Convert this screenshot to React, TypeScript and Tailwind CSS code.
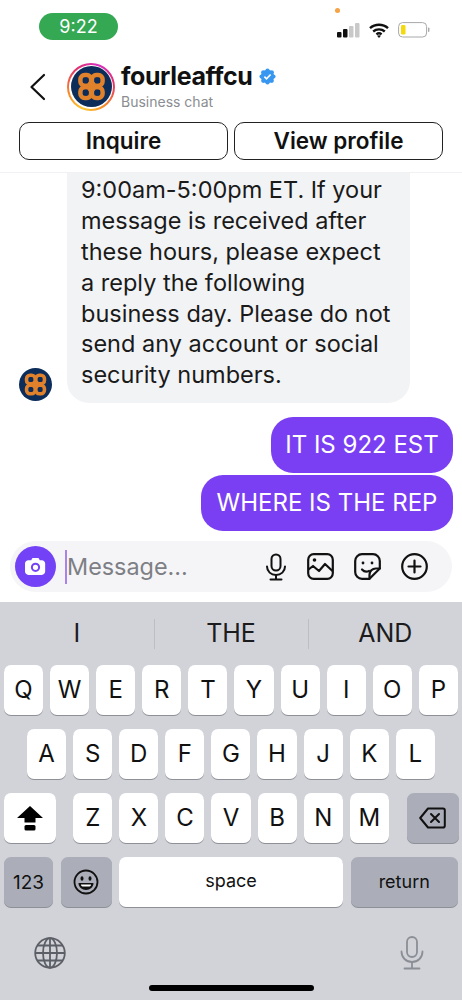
import React from 'react';

const FONT = "font-['Inter','Liberation_Sans',sans-serif]";

const Logo = ({ size }: { size: number }) => (
  <svg width={size} height={size} viewBox="0 0 48 48">
    <circle cx="24" cy="24" r="24" fill="#0c2c5a" />
    <g fill="none" stroke="#e0812c" strokeWidth="5.2">
      <rect x="11" y="10.500" width="12.500" height="12.500" rx="5" />
      <rect x="11" y="25" width="12.500" height="12.500" rx="5" />
      <rect x="24.500" y="10.500" width="12.500" height="12.500" rx="5" />
      <rect x="24.500" y="25" width="12.500" height="12.500" rx="5" />
    </g>
    <rect x="20" y="19" width="8" height="10" fill="#e0812c" />
    <ellipse cx="17.300" cy="16.800" rx="2.800" ry="3.400" fill="#0c2c5a" />
    <ellipse cx="30.700" cy="16.800" rx="2.800" ry="3.400" fill="#0c2c5a" />
    <ellipse cx="17.300" cy="31.200" rx="2.800" ry="3.400" fill="#0c2c5a" />
    <ellipse cx="30.700" cy="31.200" rx="2.800" ry="3.400" fill="#0c2c5a" />
  </svg>
);

const StatusIcons = () => (
  <div className="flex items-center gap-[8px]">
    <svg width="24" height="16" viewBox="0 0 24 16">
      <rect x="0" y="10" width="4.500" height="5.500" rx="1" fill="#111" />
      <rect x="6" y="7" width="4.500" height="8.500" rx="1" fill="#111" />
      <rect x="12" y="4" width="4.500" height="11.500" rx="1" fill="#c9c9c9" />
      <rect x="18" y="1" width="4.500" height="14.500" rx="1" fill="#c9c9c9" />
    </svg>
    <svg width="20" height="15" viewBox="0 0 20 15" fill="none" stroke="#111" strokeWidth="2.400">
      <path d="M1 5.200c5-4.600 13-4.600 18 0" />
      <path d="M4.200 8.500c3.200-2.800 8.400-2.800 11.600 0" />
      <path d="M7.400 11.400c1.500-1.200 3.700-1.200 5.200 0" />
      <path d="M10 15l-2-2.200c1.100-.9 2.900-.9 4 0z" fill="#111" stroke="none" />
    </svg>
    <svg width="32" height="16" viewBox="0 0 32 16" className="ml-[1px]">
      <rect x="0.600" y="0.600" width="28" height="14.400" rx="4" fill="#fff" stroke="#a8a8a8" />
      <rect x="3" y="3" width="4.500" height="9.600" rx="1.400" fill="#f5d90a" />
      <rect x="30" y="5.500" width="1.400" height="4.500" rx="0.700" fill="#a8a8a8" />
    </svg>
  </div>
);

const Verified = () => (
  <svg width="17" height="17" viewBox="0 0 24 24">
    <g fill="#3897f0">
      <circle cx="12" cy="12" r="9.400" />
      <circle cx="12" cy="3.600" r="3" />
      <circle cx="12" cy="20.400" r="3" />
      <circle cx="3.600" cy="12" r="3" />
      <circle cx="20.400" cy="12" r="3" />
      <circle cx="6" cy="6" r="3" />
      <circle cx="18" cy="6" r="3" />
      <circle cx="6" cy="18" r="3" />
      <circle cx="18" cy="18" r="3" />
    </g>
    <path d="M7.600 12.200l3 3 5.800-6" fill="none" stroke="#fff" strokeWidth="2.400" />
  </svg>
);

const Header = () => (
  <div className="h-[120px] shrink-0 bg-white border-b border-[#f1f1f3]">
    <div className="h-[67px] flex items-center pl-[26px]">
      <svg width="24" height="28" viewBox="0 0 24 28" fill="none" stroke="#111" strokeWidth="2.200" strokeLinecap="round" strokeLinejoin="round">
        <path d="M18 2 L5.500 14 L18 26" />
      </svg>
      <div className="ml-[17px] w-[48px] h-[48px] rounded-full bg-[conic-gradient(from_200deg,#fdc830,#f58529,#e1306c,#d62fc0,#e1306c,#f58529,#fdc830)] flex items-center justify-center">
        <div className="w-[44px] h-[44px] rounded-full bg-white flex items-center justify-center">
          <Logo size={41} />
        </div>
      </div>
      <div className="ml-[6px] mt-[-1px] flex flex-col">
        <div className="flex items-center gap-[6px] h-[29px]">
          <span className="text-[25px] font-bold text-[#111] tracking-[-0.400px] leading-none">fourleaffcu</span>
          <Verified />
        </div>
        <span className="text-[14px] text-[#8a8d91] leading-[18px] mt-[2px]">Business chat</span>
      </div>
    </div>
    <div className="flex gap-[6px] pl-[19px] pr-[19px] mt-[2px]">
      <button className="flex-1 h-[38px] rounded-[10px] border border-[#222] text-[22.500px] font-semibold text-[#111] leading-none">Inquire</button>
      <button className="flex-1 h-[38px] rounded-[10px] border border-[#222] text-[22.500px] font-semibold text-[#111] leading-none">View profile</button>
    </div>
  </div>
);

const Chat = () => (
  <div className="h-[368px] shrink-0 flex flex-col justify-end overflow-hidden pl-[10px] pr-[9px] bg-white">
    <div className="flex items-end pl-[9px] mb-[14px]">
      <div className="mb-[2px]"><Logo size={33} /></div>
      <div className="ml-[15px] w-[343px] bg-[#f2f3f5] rounded-[22px] pl-[14px] pr-[10px] pt-[30px] pb-[12px] text-[23.500px] leading-[30.800px] text-[#1a1a1a]">
        <p className="whitespace-pre-line">{'9:00am-5:00pm ET. If your\nmessage is received after\nthese hours, please expect\na reply the following\nbusiness day. Please do not\nsend any account or social\nsecurity numbers.'}</p>
      </div>
    </div>
    <div className="flex flex-col items-end gap-[2px] mb-[10px]">
      <div className="h-[56px] w-[182px] flex items-center justify-center bg-[#7a3ff2] rounded-[22px] text-white text-[24px] whitespace-nowrap">IT IS 922 EST</div>
      <div className="h-[56px] w-[252px] flex items-center justify-center bg-[#7a3ff2] rounded-[22px] text-white text-[24px] whitespace-nowrap">WHERE IS THE REP</div>
    </div>
  </div>
);

const InputBar = () => (
  <div className="h-[61px] shrink-0 bg-white px-[10px]">
    <div className="h-[51px] rounded-full bg-[#f5f5f7] flex items-center pl-[5px] pr-[24px]">
      <div className="w-[41px] h-[41px] rounded-full bg-[#7342f6] flex items-center justify-center">
        <svg width="21" height="19" viewBox="0 0 25 22">
          <path d="M8 2.500c.4-1 1-1.500 2-1.500h5c1 0 1.600.5 2 1.500l.5 1h2.500c2.200 0 4 1.800 4 4V17c0 2.200-1.800 4-4 4H4c-2.200 0-4-1.800-4-4V7.500c0-2.200 1.800-4 4-4h3.500z" fill="#fff" />
          <circle cx="12.500" cy="12" r="4.300" fill="none" stroke="#7342f6" strokeWidth="2.400" />
        </svg>
      </div>
      <div className="ml-[9px] w-[2px] h-[34px] bg-[#a883e8]" />
      <span className="text-[23.400px] text-[#7d7f85] leading-none">Message...</span>
      <div className="ml-auto flex items-center gap-[20px]">
        <svg width="22" height="28" viewBox="0 0 22 28" fill="none" stroke="#111" strokeWidth="2" strokeLinecap="round">
          <rect x="6.500" y="1.500" width="9" height="16" rx="4.500" />
          <path d="M2 13.500c0 5 4 8.500 9 8.500s9-3.500 9-8.500" />
          <path d="M11 22v4M5.500 26.500h11" />
        </svg>
        <svg width="27" height="27" viewBox="0 0 27 27" fill="none" stroke="#111" strokeWidth="2.200" strokeLinejoin="round">
          <rect x="1.200" y="1.200" width="24.600" height="24.600" rx="5.500" />
          <circle cx="7.500" cy="7" r="1.800" fill="#111" stroke="none" />
          <path d="M1.500 16.500l4.500-3.500 6 5 6-7 7.500 7" />
        </svg>
        <svg width="27" height="27" viewBox="0 0 27 27" fill="none" stroke="#111" strokeWidth="2.200" strokeLinecap="round" strokeLinejoin="round">
          <path d="M15.500 25.800H8c-3.800 0-6.800-3-6.800-6.800V8c0-3.800 3-6.800 6.800-6.800h11c3.800 0 6.800 3 6.800 6.800v7.500z" />
          <path d="M15.500 25.800v-4c0-3.500 2.800-6.300 6.300-6.300h4" />
          <circle cx="9" cy="10" r="1.400" fill="#111" stroke="none" />
          <circle cx="18" cy="10" r="1.400" fill="#111" stroke="none" />
          <path d="M8 16.500c1.800 2 4.500 2.600 7 1.500" />
        </svg>
        <svg width="27" height="27" viewBox="0 0 27 27" fill="none" stroke="#111" strokeWidth="2.200" strokeLinecap="round">
          <circle cx="13.500" cy="13.500" r="12.300" />
          <path d="M13.500 7.500v12M7.500 13.500h12" />
        </svg>
      </div>
    </div>
  </div>
);

const KEY = 'h-[50px] rounded-[7px] bg-white shadow-[0_1px_0_#8e9097] flex items-center justify-center text-[#111] leading-none';
const DARK = 'h-[50px] rounded-[7px] bg-[#abaeb9] shadow-[0_1px_0_#8e9097] flex items-center justify-center text-[#111] leading-none';

const Letters = ({ keys }: { keys: string[] }) => (
  <>
    {keys.map((k) => (
      <div key={k} className={`${KEY} w-[39.100px] text-[24px]`}>{k}</div>
    ))}
  </>
);

const Keyboard = () => (
  <div className="flex-1 bg-[#d1d3d9] relative">
    <div className="h-[63px] flex items-center text-[25px] text-[#1c1c1e] leading-none">
      <div className="flex-1 text-center">I</div>
      <div className="w-[1px] h-[30px] bg-[#bcbec6]" />
      <div className="w-[153px] text-center">THE</div>
      <div className="w-[1px] h-[30px] bg-[#bcbec6]" />
      <div className="flex-1 text-center">AND</div>
    </div>
    <div className="flex flex-col gap-[14px]">
      <div className="flex gap-[7px] px-[4px]">
        <Letters keys={['Q', 'W', 'E', 'R', 'T', 'Y', 'U', 'I', 'O', 'P']} />
      </div>
      <div className="flex gap-[7px] px-[27px]">
        <Letters keys={['A', 'S', 'D', 'F', 'G', 'H', 'J', 'K', 'L']} />
      </div>
      <div className="flex justify-between px-[3.500px]">
        <div className={`${KEY} w-[52px]`}>
          <svg width="26" height="25" viewBox="0 0 26 25" fill="#000">
            <path d="M13 0 L26 12 H18.500 V16.500 H7.500 V12 H0 Z" />
            <rect x="7.500" y="19" width="11" height="5.500" rx="1.500" />
          </svg>
        </div>
        <div className="flex gap-[7px]">
          <Letters keys={['Z', 'X', 'C', 'V', 'B', 'N', 'M']} />
        </div>
        <div className={`${DARK} w-[52px]`}>
          <svg width="27" height="22" viewBox="0 0 27 22" fill="none" stroke="#111" strokeWidth="2" strokeLinejoin="round" strokeLinecap="round">
            <path d="M9 1.500h15c1 0 1.800.8 1.800 1.800v15.400c0 1-.8 1.800-1.800 1.800H9L1.200 11z" />
            <path d="M12 7l8 8M20 7l-8 8" />
          </svg>
        </div>
      </div>
      <div className="flex gap-[7.500px] px-[4px]">
        <div className={`${DARK} w-[49px] text-[19px]`}>123</div>
        <div className={`${DARK} w-[51px]`}>
          <svg width="26" height="26" viewBox="0 0 26 26" fill="none" stroke="#111" strokeWidth="1.800">
            <circle cx="13" cy="13" r="11.500" />
            <ellipse cx="9" cy="9.500" rx="1.500" ry="2.200" fill="#111" stroke="none" />
            <ellipse cx="17" cy="9.500" rx="1.500" ry="2.200" fill="#111" stroke="none" />
            <path d="M5.500 14h15c0 4-3.400 7-7.500 7s-7.500-3-7.500-7z" fill="#111" stroke="none" />
            <path d="M8 15.500h10c0 1.200-.8 2-1.500 2h-7c-.7 0-1.500-.8-1.500-2z" fill="#fff" stroke="none" />
          </svg>
        </div>
        <div className={`${KEY} w-[224px] text-[18px] pb-[3px]`}>space</div>
        <div className={`${DARK} flex-1 text-[18px]`}>return</div>
      </div>
    </div>
    <div className="flex justify-between items-center pl-[34px] pr-[38px] mt-[29px]">
      <svg width="32" height="32" viewBox="0 0 32 32" fill="none" stroke="#5d5f66" strokeWidth="1.800">
        <circle cx="16" cy="16" r="14.800" />
        <ellipse cx="16" cy="16" rx="7" ry="14.800" />
        <path d="M16 1.200v29.600M1.200 16h29.600M3.500 8.500h25M3.500 23.500h25" />
      </svg>
      <svg width="24" height="34" viewBox="0 0 24 34" fill="none" stroke="#8c8e96" strokeWidth="1.800" strokeLinecap="round">
        <rect x="7" y="1" width="10" height="20" rx="5" />
        <path d="M1.500 15.500c0 6 4.500 10.500 10.500 10.500s10.500-4.500 10.500-10.500" />
        <path d="M12 26v6M4.500 32.500h15" />
      </svg>
    </div>
    <div className="absolute left-[149px] bottom-[9px] w-[165px] h-[6px] rounded-full bg-black" />
  </div>
);

export default function App() {
  return (
    <div className={`${FONT} w-[462px] h-[1000px] flex flex-col bg-white overflow-hidden relative`}>
      <div className="h-[53px] shrink-0 flex items-start justify-between pl-[39px] pr-[32px] pt-[13px] relative">
        <div className="w-[79px] h-[27px] rounded-full bg-[#34a853] flex items-center justify-center text-white text-[18px] leading-none">9:22</div>
        <div className="mt-[9px]"><StatusIcons /></div>
        <div className="absolute left-[335px] top-[8px] w-[5px] h-[5px] rounded-full bg-[#f5a344]" />
      </div>
      <Header />
      <Chat />
      <InputBar />
      <Keyboard />
    </div>
  );
}
